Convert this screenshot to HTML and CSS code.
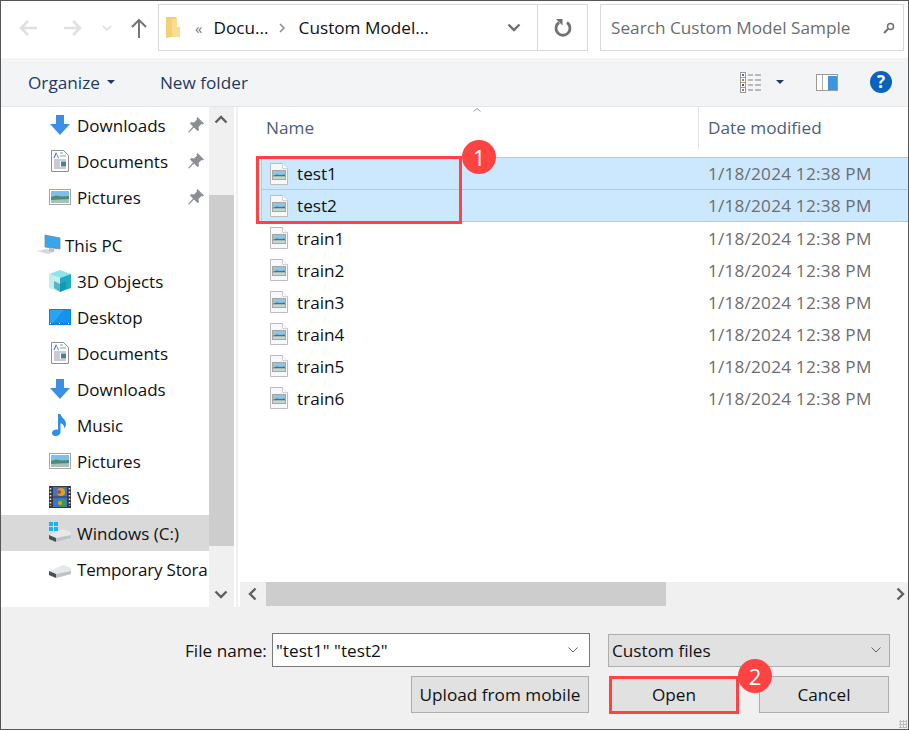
FILE: index.html
```html
<!DOCTYPE html>
<html lang="en">
<head>
    <meta charset="UTF-8">
    <title>Open</title>
    <link rel="stylesheet" href="styles.css">
</head>
<body>
    <svg class="defs" width="0" height="0">
        <symbol id="i-file" viewBox="0 0 18 22">
            <path d="M.5.5h12l5 5v16H.5z" fill="#f8f8f8" stroke="#bcbcbc"/>
            <path d="M12.5.5v5h5" fill="#fff" stroke="#cfcfcf"/>
            <rect x="2.5" y="7.5" width="13" height="9" fill="#fff" stroke="#a5a5a5"/>
            <rect x="3" y="8" width="12" height="4.500" fill="#8ac6ee"/>
            <path d="M3 12.500l4-1 4 .5 4-.5v2H3z" fill="#4a7866"/>
            <rect x="3" y="14" width="12" height="2" fill="#c6d6d2"/>
        </symbol>
        <symbol id="i-down" viewBox="0 0 20 20">
            <path d="M6 0h8v9h6L10 20 0 9h6z" fill="#3c8fe3"/>
        </symbol>
        <symbol id="i-doc" viewBox="0 0 18 22">
            <path d="M.5.5h12l5 5v16H.5z" fill="#fff" stroke="#8f8f8f"/>
            <path d="M5 2L2.5 8h1l2-4 1.500 4h1z" fill="#2b7fd6"/>
            <path d="M9 3h3M9 6h6M3 10h12M3 12h6M3 14h6M3 16h6M3 18h12" stroke="#8d9aa6"/>
            <rect x="10" y="11.500" width="5" height="5" fill="#4a7da0"/>
        </symbol>
        <symbol id="i-pic" viewBox="0 0 22 16">
            <rect x=".5" y=".5" width="21" height="15" fill="#fff" stroke="#a5a5a5"/>
            <rect x="2" y="2" width="18" height="6" fill="#7fc0ea"/>
            <path d="M2 8l5-1.500 6 1 7-.5v4H2z" fill="#4f8a78"/>
            <path d="M2 11l18-1v4H2z" fill="#a8c0ba"/>
        </symbol>
        <symbol id="i-pin" viewBox="0 0 16 16">
            <path d="M9.500 0L16 6.500l-1.500 1-1-.5-3 3 .5 3L9.500 14 6 10.500 1 15.500 0 15l5-5.500L2 6.500 3 5l3 .5 3-3-.5-1z" fill="#8b8f94"/>
        </symbol>
        <symbol id="i-pc" viewBox="0 0 24 22">
            <path d="M8 1l15 3v11L8 13z" fill="#37a6ec" stroke="#7b8894" stroke-width=".8"/>
            <path d="M0 17l9-2 10 2-8 3z" fill="#d5d8db"/>
            <path d="M12 14l5 1v3l-5-1z" fill="#b9bec2"/>
        </symbol>
        <symbol id="i-cube" viewBox="0 0 22 22">
            <path d="M11 0l11 4-11 4L0 4z" fill="#8fe3ea"/>
            <path d="M0 4l11 4v14L0 18z" fill="#c3eef0"/>
            <path d="M22 4L11 8v14l11-4z" fill="#1fa9c4"/>
            <path d="M5 11l6 3v8l-6-4zM17 11l-6 3v8l6-4z" fill="#0f8ea8" opacity=".6"/>
        </symbol>
        <symbol id="i-desk" viewBox="0 0 22 16">
            <rect width="22" height="16" fill="#0a84e0"/>
            <rect x="1" y="1" width="20" height="13" fill="#2ba3f2"/>
            <path d="M4 14L15 1h6v13z" fill="#1493ea"/>
            <path d="M1 14.500h20" stroke="#dff1ff" stroke-dasharray="1 8"/>
        </symbol>
        <symbol id="i-music" viewBox="0 0 16 22">
            <path d="M6 0h2.500c.5 3.500 5.500 5 5.500 10 0 2-.8 3.200-1.800 4.200 .3-2.700-2-4.700-3.700-5V18c0 2.500-2.500 4-5 4C1.500 22 0 20.800 0 19c0-2 2.200-3.500 4.500-3.500.6 0 1.100.1 1.500.3z" fill="#2f8fe6"/>
        </symbol>
        <symbol id="i-video" viewBox="0 0 22 22">
            <rect width="22" height="22" fill="#3a3a3a"/>
            <rect x="4" y="1" width="14" height="9.500" fill="#3f73c9"/>
            <rect x="4" y="11.500" width="14" height="9.500" fill="#3f73c9"/>
            <circle cx="12" cy="6" r="4" fill="#d9a520"/>
            <circle cx="10" cy="6" r="2" fill="#c8402c"/>
            <circle cx="13" cy="17" r="4" fill="#3d9a4b"/>
            <circle cx="11" cy="17" r="2" fill="#d9a520"/>
            <path d="M1.500 2v18M20.500 2v18" stroke="#e8e8e8" stroke-width="1.500" stroke-dasharray="1.500 2"/>
        </symbol>
        <symbol id="i-drive" viewBox="0 0 22 14">
            <path d="M0 7l14-6 8 3v6L7 14l-7-3z" fill="#e6e8ea"/>
            <path d="M0 7l7 3v4l-7-3z" fill="#4b4f53"/>
            <path d="M7 10l15-3v3L7 14z" fill="#bfc3c6"/>
        </symbol>
        <symbol id="i-win" viewBox="0 0 9 9">
            <path d="M0 0h4v4H0zM5 0h4v4H5zM0 5h4v4H0zM5 5h4v4H5z" fill="#18b4f1"/>
        </symbol>
    </svg>

    <div class="dialog">
        <div class="addressbar">
            <div class="navbtns">
                <svg class="ic-arrow" width="18" height="18" viewBox="0 0 18 18"><path d="M18 9H2M9 2L2 9l7 7" fill="none" stroke="#e0e0e0" stroke-width="2.600"/></svg>
                <svg class="ic-arrow fwd" width="18" height="18" viewBox="0 0 18 18"><path d="M0 9h16M9 2l7 7-7 7" fill="none" stroke="#e0e0e0" stroke-width="2.600"/></svg>
                <svg class="ic-recent" width="10" height="6" viewBox="0 0 10 6"><path d="M1 1l4 4 4-4" fill="none" stroke="#dcdcdc" stroke-width="1.500"/></svg>
                <svg class="ic-up" width="16" height="20" viewBox="0 0 16 20"><path d="M8 20V2M1 9l7-7 7 7" fill="none" stroke="#757575" stroke-width="2"/></svg>
            </div>
            <div class="crumbs">
                <div class="crumb-main">
                    <svg class="ic-folder" width="14" height="21" viewBox="0 0 14 21"><path d="M0 0h10l1 2v17l-11 2z" fill="#f3d071"/><path d="M6 2h5v8h3v10H6z" fill="#f7de93"/></svg>
                    <span class="chev-dbl">«</span>
                    <span class="crumb">Docu...</span>
                    <svg class="sep" width="6" height="10" viewBox="0 0 6 10"><path d="M1 1l4 4-4 4" fill="none" stroke="#8a8a8a" stroke-width="1.500"/></svg>
                    <span class="crumb second">Custom Model...</span>
                </div>
                <div class="crumb-drop">
                    <svg width="14" height="9" viewBox="0 0 14 9"><path d="M1.500 1.500L7 7l5.500-5.500" fill="none" stroke="#707070" stroke-width="2.400"/></svg>
                </div>
                <div class="crumb-refresh">
                    <svg width="18" height="19" viewBox="0 0 18 19"><path d="M5 4.500a7 7 0 1 0 8 0" fill="none" stroke="#707070" stroke-width="2.800"/><path d="M2 1h6.500v6.500z" fill="#707070"/></svg>
                </div>
            </div>
            <div class="search">
                <span>Search Custom Model Sample</span>
                <svg width="12" height="12" viewBox="0 0 12 12"><circle cx="7.500" cy="4.500" r="3" fill="none" stroke="#707070" stroke-width="1.500"/><path d="M5 7l-4 4" stroke="#707070" stroke-width="2"/></svg>
            </div>
        </div>

        <div class="toolbar">
            <button class="tool organize">Organize <i class="caret"></i></button>
            <button class="tool">New folder</button>
            <div class="tool-right">
                <svg class="ic-views" width="22" height="21" viewBox="0 0 22 21">
                    <rect x=".5" y=".5" width="5" height="20" fill="#fff" stroke="#9a9a9a"/>
                    <path d="M1 5.500h4M1 10.500h4M1 15.500h4" stroke="#9a9a9a"/>
                    <rect x="2" y="2" width="2" height="2" fill="#3b78c4"/>
                    <rect x="2" y="7" width="2" height="2" fill="#a09020"/>
                    <rect x="2" y="12" width="2" height="2" fill="#c03020"/>
                    <rect x="2" y="17" width="2" height="2" fill="#808080"/>
                    <path d="M8 3h5M15 3h6M8 8h5M15 8h6M8 13h5M15 13h6M8 18h5M15 18h6" stroke="#7f7f7f"/>
                </svg>
                <i class="caret"></i>
                <svg class="ic-pane" width="22" height="17" viewBox="0 0 22 17">
                    <rect x=".5" y=".5" width="21" height="16" fill="#fff" stroke="#9a9a9a"/>
                    <rect x="12" y="2" width="9" height="14" fill="#3d95e0"/>
                    <path d="M6.500 1v15" stroke="#b0b0b0"/>
                </svg>
                <svg class="ic-help" width="22" height="22" viewBox="0 0 22 22">
                    <circle cx="11" cy="11" r="11" fill="#0a64bd"/>
                    <text x="11" y="17" text-anchor="middle" class="help-q">?</text>
                </svg>
            </div>
        </div>

        <div class="main">
            <div class="nav">
                <div class="nav-list">
                    <div class="nav-item"><svg width="20" height="20"><use href="#i-down"/></svg><span>Downloads</span><svg class="pin" width="16" height="16"><use href="#i-pin"/></svg></div>
                    <div class="nav-item"><svg class="narrow" width="18" height="22"><use href="#i-doc"/></svg><span>Documents</span><svg class="pin" width="16" height="16"><use href="#i-pin"/></svg></div>
                    <div class="nav-item"><svg width="22" height="16"><use href="#i-pic"/></svg><span>Pictures</span><svg class="pin" width="16" height="16"><use href="#i-pin"/></svg></div>
                    <div class="nav-item root"><svg width="24" height="22"><use href="#i-pc"/></svg><span>This PC</span></div>
                    <div class="nav-item"><svg width="22" height="22"><use href="#i-cube"/></svg><span>3D Objects</span></div>
                    <div class="nav-item"><svg width="22" height="16"><use href="#i-desk"/></svg><span>Desktop</span></div>
                    <div class="nav-item"><svg class="narrow" width="18" height="22"><use href="#i-doc"/></svg><span>Documents</span></div>
                    <div class="nav-item"><svg width="20" height="20"><use href="#i-down"/></svg><span>Downloads</span></div>
                    <div class="nav-item"><svg class="narrow" width="18" height="22"><use href="#i-music"/></svg><span>Music</span></div>
                    <div class="nav-item"><svg width="22" height="16"><use href="#i-pic"/></svg><span>Pictures</span></div>
                    <div class="nav-item"><svg width="22" height="22"><use href="#i-video"/></svg><span>Videos</span></div>
                    <div class="nav-item active"><span class="drive"><svg class="win" width="9" height="9"><use href="#i-win"/></svg><svg width="22" height="14"><use href="#i-drive"/></svg></span><span>Windows (C:)</span></div>
                    <div class="nav-item"><span class="drive"><svg width="22" height="14"><use href="#i-drive"/></svg></span><span class="tight">Temporary Stora</span></div>
                    <div class="nav-item network"><svg width="22" height="22"><use href="#i-pc"/></svg></div>
                </div>
            </div>
            <div class="vscroll">
                <div class="sb-btn"><svg width="14" height="9" viewBox="0 0 14 9"><path d="M1.500 7.500L7 2l5.500 5.500" fill="none" stroke="#606060" stroke-width="2.400"/></svg></div>
                <div class="vtrack"><div class="vthumb"></div></div>
                <div class="sb-btn"><svg width="14" height="9" viewBox="0 0 14 9"><path d="M1.500 1.500L7 7l5.500-5.500" fill="none" stroke="#606060" stroke-width="2.400"/></svg></div>
            </div>
            <div class="split"></div>
            <div class="files">
                <div class="file-area">
                    <div class="headers">
                        <div class="col-name">Name<svg class="sort" width="8" height="4" viewBox="0 0 8 4"><path d="M.5 3.500L4 .5l3.500 3" fill="none" stroke="#9a9a9a"/></svg></div>
                        <div class="col-date">Date modified</div>
                    </div>
                    <div class="rows">
                        <div class="row selected"><span class="name"><svg width="18" height="22"><use href="#i-file"/></svg>test1</span><span class="date">1/18/2024 12:38 PM</span></div>
                        <div class="row selected"><span class="name"><svg width="18" height="22"><use href="#i-file"/></svg>test2</span><span class="date">1/18/2024 12:38 PM</span></div>
                        <div class="row"><span class="name"><svg width="18" height="22"><use href="#i-file"/></svg>train1</span><span class="date">1/18/2024 12:38 PM</span></div>
                        <div class="row"><span class="name"><svg width="18" height="22"><use href="#i-file"/></svg>train2</span><span class="date">1/18/2024 12:38 PM</span></div>
                        <div class="row"><span class="name"><svg width="18" height="22"><use href="#i-file"/></svg>train3</span><span class="date">1/18/2024 12:38 PM</span></div>
                        <div class="row"><span class="name"><svg width="18" height="22"><use href="#i-file"/></svg>train4</span><span class="date">1/18/2024 12:38 PM</span></div>
                        <div class="row"><span class="name"><svg width="18" height="22"><use href="#i-file"/></svg>train5</span><span class="date">1/18/2024 12:38 PM</span></div>
                        <div class="row"><span class="name"><svg width="18" height="22"><use href="#i-file"/></svg>train6</span><span class="date">1/18/2024 12:38 PM</span></div>
                    </div>
                </div>
                <div class="hscroll">
                    <div class="sb-btn"><svg width="9" height="14" viewBox="0 0 9 14"><path d="M7.500 1.500L2 7l5.500 5.500" fill="none" stroke="#606060" stroke-width="2.400"/></svg></div>
                    <div class="htrack"><div class="hthumb"></div></div>
                    <div class="sb-btn end"><svg width="9" height="14" viewBox="0 0 9 14"><path d="M1.500 1.500L7 7l-5.500 5.500" fill="none" stroke="#606060" stroke-width="2.400"/></svg></div>
                </div>
            </div>
        </div>

        <div class="footer">
            <div class="footer-row top">
                <label class="fn-label">File name:</label>
                <div class="fn-input"><span>"test1" "test2"</span><svg width="10" height="6" viewBox="0 0 10 6"><path d="M.5.5L5 5 9.500.5" fill="none" stroke="#606060"/></svg></div>
                <div class="fn-type"><span>Custom files</span><svg width="10" height="6" viewBox="0 0 10 6"><path d="M.5.5L5 5 9.500.5" fill="none" stroke="#606060"/></svg></div>
            </div>
            <div class="footer-row bottom">
                <button class="btn upload">Upload from mobile</button>
                <button class="btn open">Open</button>
                <button class="btn cancel">Cancel</button>
            </div>
            <div class="grip"></div>
        </div>

        <!-- annotations drawn over the dialog -->
        <div class="mark mark-files"></div>
        <div class="badge badge-1">1</div>
        <div class="mark mark-open"></div>
        <div class="badge badge-2">2</div>
    </div>
</body>
</html>
```

FILE: styles.css
```css
* { box-sizing: border-box; }
html, body { margin: 0; padding: 0; background: #fff; }
body {
    font-family: "Open Sans", "Noto Sans", sans-serif;
    font-size: 17.2px;
    color: #111;
}
.defs { position: absolute; }
svg { display: block; flex: none; }

.dialog {
    position: relative;
    width: 909px;
    height: 730px;
    display: flex;
    flex-direction: column;
    border: 1px solid #555;
    overflow: hidden;
}

/* address bar */
.addressbar {
    height: 57px;
    flex: none;
    display: flex;
    align-items: flex-start;
    padding-top: 3px;
    background: #fff;
}
.navbtns { width: 157px; height: 47px; display: flex; align-items: center; padding-left: 18px; flex: none; }
.fwd { margin-left: 27px; }
.ic-recent { margin-left: 20px; }
.ic-up { margin-left: 19px; }
.crumbs {
    width: 430px;
    height: 47px;
    display: flex;
    border: 1px solid #d9d9d9;
    flex: none;
}
.crumb-main { flex: 1; display: flex; align-items: center; padding-left: 7px; color: #111; white-space: nowrap; }
.chev-dbl { margin-left: 15px; color: #7d7d7d; font-size: 15px; }
.crumb { margin-left: 11px; }
.sep { margin-left: 10px; }
.crumb.second { margin-left: 14px; }
.crumb-drop { width: 50px; display: flex; align-items: center; justify-content: center; padding-left: 3px; }
.crumb-refresh {
    width: 50px;
    display: flex;
    align-items: center;
    justify-content: center;
    border-left: 1px solid #d9d9d9;
}
.search {
    margin-left: 12px;
    width: 304px;
    height: 47px;
    flex: none;
    display: flex;
    align-items: center;
    justify-content: space-between;
    padding: 0 8px 0 10px;
    border: 1px solid #d9d9d9;
    color: #6d6d6d;
}

/* command bar */
.toolbar {
    height: 49px;
    flex: none;
    display: flex;
    align-items: center;
    padding-left: 27px;
    background: #f3f4f6;
    border-bottom: 1px solid #e6e6e6;
}
.tool {
    background: none;
    border: 0;
    padding: 0;
    font: inherit;
    color: #1e3a5f;
    display: flex;
    align-items: center;
}
.organize { margin-right: 45px; }
.caret {
    display: inline-block;
    width: 0;
    height: 0;
    margin-left: 7px;
    border-left: 4px solid transparent;
    border-right: 4px solid transparent;
    border-top: 4px solid #1e3a5f;
}
.tool-right { margin-left: auto; display: flex; align-items: center; padding-right: 16px; }
.ic-views { margin-right: -1px; }
.ic-pane { margin-left: 32px; }
.ic-help { margin-left: 32px; }
.tool-right .caret { margin-left: 15px; }
.help-q { font: bold 17px "Open Sans", sans-serif; fill: #fff; }

/* main area */
.main { flex: 1; min-height: 0; display: flex; background: #fff; }
.nav { width: 208px; flex: none; overflow: hidden; font-size: 17px; }
.nav-list { display: flex; flex-direction: column; }
.nav-item {
    height: 36px;
    flex: none;
    display: flex;
    align-items: center;
    white-space: nowrap;
    padding-left: 48px;
}
.nav-item > svg:first-child, .drive { width: 22px; }
.nav-item > svg.narrow { width: 18px; margin-left: 2px; margin-right: 2px; }
.nav-item > span:not(.drive) { margin-left: 6px; }
.nav-item .pin { margin-left: auto; margin-right: 5px; }
.nav-item.root { margin-top: 12px; padding-left: 36px; }
.nav-item.root > svg:first-child { width: 24px; }
.nav-item.root > span { margin-left: 4px; }
.nav-item.active { background: #d9d9d9; }
.nav-item.network { margin-top: 12px; }
.tight { letter-spacing: -.2px; }
.drive { display: flex; flex-direction: column; justify-content: center; position: relative; height: 22px; }
.drive svg { margin-top: 4px; }
.drive .win { position: absolute; left: 0; top: 0; margin: 0; }

.vscroll {
    width: 25px;
    flex: none;
    background: #f0f0f0;
    display: flex;
    flex-direction: column;
    padding-bottom: 1px;
}
.sb-btn { width: 24px; height: 24px; flex: none; display: flex; align-items: center; justify-content: center; }
.vtrack { flex: 1; padding-top: 64px; padding-bottom: 36px; display: flex; }
.vthumb { flex: 1; background: #cdcdcd; }
.split { width: 6px; flex: none; border-left: 2px solid #fff; border-right: 2px solid #fff; background: #f0f0f0; }

.files { flex: 1; min-width: 0; display: flex; flex-direction: column; }
.file-area { flex: 1; min-height: 0; }
.headers { height: 42px; display: flex; color: #4c607a; position: relative; }
.col-name { width: 459px; padding: 9px 0 0 26px; border-right: 1px solid #e5e5e5; }
.col-date { padding: 9px 0 0 9px; white-space: nowrap; }
.sort { position: absolute; left: 233px; top: 1px; }
.rows { padding-top: 8px; display: flex; flex-direction: column; padding-left: 21px; }
.row {
    height: 32px;
    display: flex;
    align-items: center;
    border: 1px solid transparent;
    white-space: nowrap;
}
.row.selected { background: #cce8ff; border-color: #99d1ff; border-right: 0; height: 33px; }
.row.selected + .row.selected { margin-top: -1px; }
.name { width: 446px; padding-left: 8px; display: flex; align-items: center; }
.name svg { margin-right: 9px; }
.date { color: #6d6d6d; letter-spacing: .2px; }

.hscroll { height: 25px; flex: none; display: flex; background: #f0f0f0; padding-bottom: 1px; }
.htrack { flex: 1; padding-left: 2px; display: flex; }
.hthumb { width: 400px; background: #cdcdcd; }
.sb-btn.end { width: 14px; justify-content: flex-start; padding-left: 2px; }

/* footer */
.footer { height: 122px; flex: none; background: #f0f0f0; position: relative; }
.footer-row { display: flex; }
.footer-row.top { padding: 26px 0 0 184px; align-items: center; }
.fn-label { width: 87px; }
.fn-input {
    width: 318px;
    height: 34px;
    border: 1px solid #7a7a7a;
    background: #fff;
    display: flex;
    align-items: center;
    justify-content: space-between;
    padding: 0 11px 0 3px;
}
.fn-type {
    margin-left: 18px;
    width: 282px;
    height: 33px;
    border: 1px solid #adadad;
    background: #e1e1e1;
    display: flex;
    align-items: center;
    justify-content: space-between;
    padding: 0 8px 0 3px;
}
.footer-row.bottom { padding: 9px 0 0 410px; }
.btn {
    height: 37px;
    background: #e1e1e1;
    border: 1px solid #adadad;
    font: inherit;
    color: #111;
    padding: 0;
}
.upload { width: 178px; }
.open { width: 128px; margin-left: 21px; }
.cancel { width: 130px; margin-left: 21px; }
.grip {
    position: absolute;
    right: 1px;
    bottom: 1px;
    width: 8px;
    height: 8px;
    background: radial-gradient(circle, #bbb 1px, transparent 1.2px) 0 0 / 3px 3px;
}

/* annotations */
.mark { position: absolute; border: 3px solid #ff4343; }
.mark-files { left: 255px; top: 155px; width: 206px; height: 68px; }
.mark-open { left: 608px; top: 675px; width: 130px; height: 38px; }
.badge {
    position: absolute;
    width: 34px;
    height: 34px;
    border-radius: 50%;
    background: #ff4343;
    color: #fff;
    font-size: 22px;
    display: flex;
    align-items: center;
    justify-content: center;
}
.badge-1 { left: 461px; top: 139px; }
.badge-2 { left: 737px; top: 658px; }
```
